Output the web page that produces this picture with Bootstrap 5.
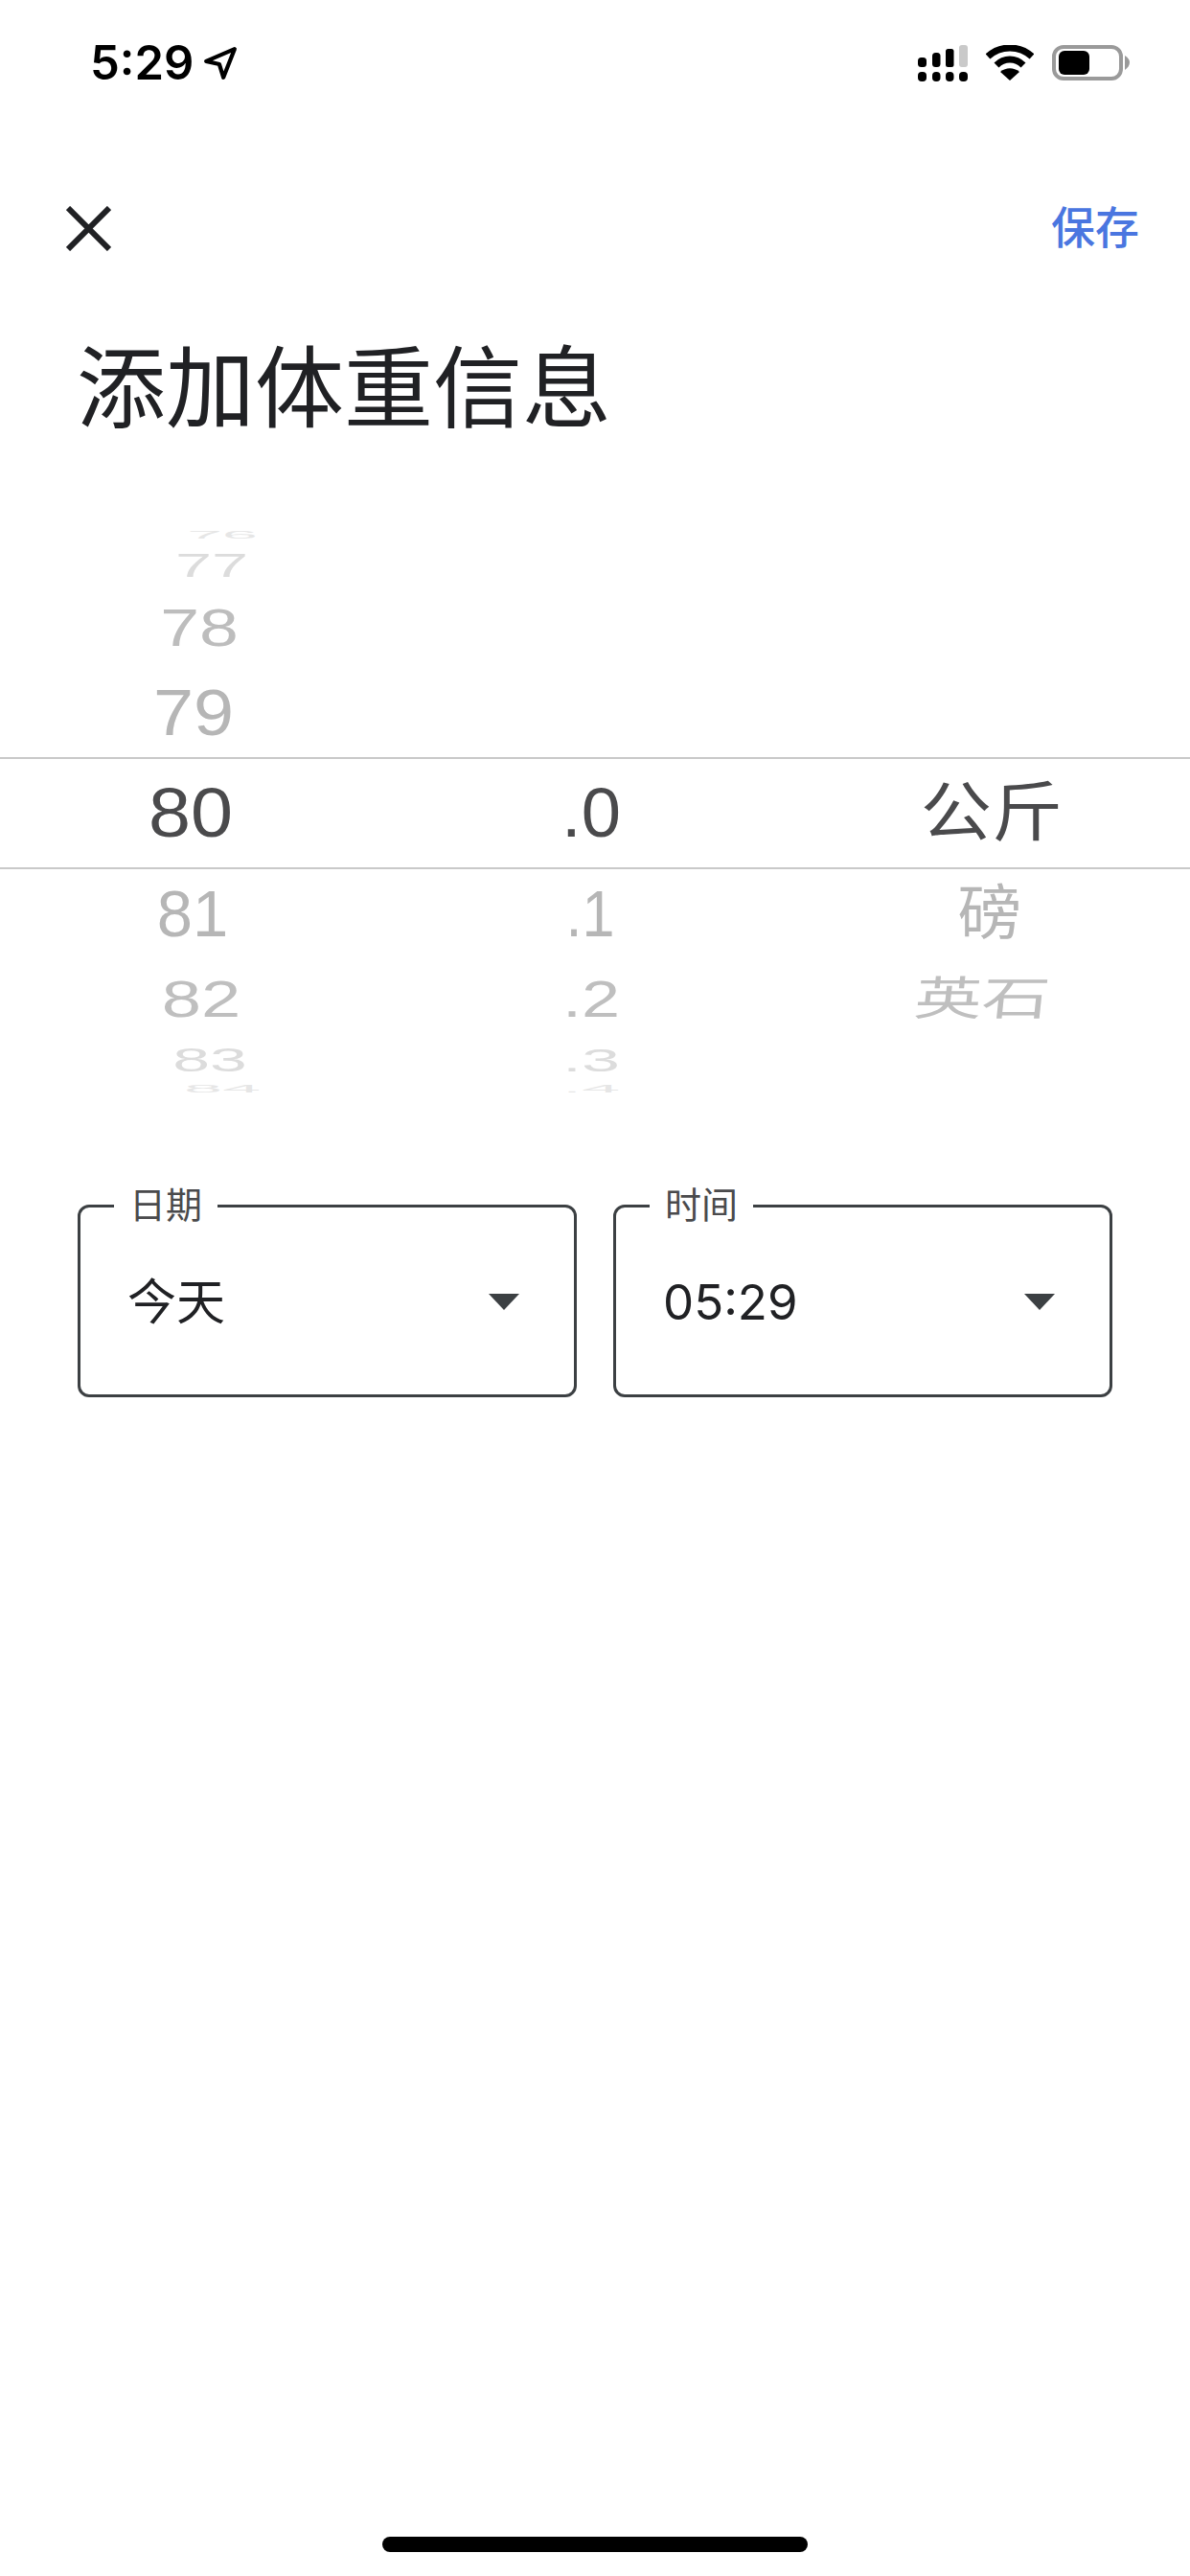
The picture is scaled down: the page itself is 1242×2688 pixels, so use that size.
<!DOCTYPE html>
<html lang="zh-CN">
<head>
  <meta charset="UTF-8">
  <meta name="viewport" content="width=device-width, initial-scale=1.0">
  <title>添加体重信息</title>
  <link href="https://cdn.jsdelivr.net/npm/bootstrap@5.3.0/dist/css/bootstrap.min.css" rel="stylesheet">
  <script src="https://cdn.jsdelivr.net/npm/bootstrap@5.3.0/dist/js/bootstrap.bundle.min.js" defer></script>
  <style>
    body {
      font-family: "Liberation Sans", "Noto Sans CJK SC", sans-serif;
      color: #202124;
      background: #fff;
    }

    /* status bar */
    .status-bar {
      height: 110px;
      padding: 21px 63px 0 94px;
    }

    .status-time {
      font-family: Inter, "Liberation Sans", sans-serif;
      font-size: 49px;
      font-weight: 600;
      line-height: 1;
      color: #000;
    }

    .status-gps {
      margin-left: 10px;
    }

    .status-icon-gap {
      margin-left: 19px;
    }

    /* top bar */
    .top-bar {
      height: 92px;
      margin-top: 82px;
      padding: 0 53px 0 69px;
    }

    .save-link {
      font-size: 46px;
      font-weight: 500;
      line-height: 1;
      color: #4a76e0;
      text-decoration: none;
    }

    .page-title {
      font-size: 93px;
      font-weight: 400;
      line-height: 110px;
      margin: 68px 0 0 80px;
      color: #202124;
    }

    /* picker wheel */
    .wheel {
      margin-top: 88px;
      font-size: 72px;
      color: #b4b4b4;
    }

    .wheel .row {
      align-items: center;
    }

    .wheel .row > div {
      text-align: center;
      white-space: nowrap;
    }

    .wheel .row > div > span {
      display: inline-block;
    }

    .wheel-r1 { height: 16px; line-height: 16px; color: #e6e6e6; }
    .wheel-r2 { height: 48px; line-height: 48px; color: #dcdcdc; }
    .wheel-r3 { height: 82px; line-height: 82px; color: #bdbdbd; }
    .wheel-r4 { height: 94px; line-height: 94px; color: #b6b6b6; }
    .wheel-now {
      height: 117px;
      line-height: 113px;
      color: #4a4a4c;
      border-top: 2px solid #c9c9c9;
      border-bottom: 2px solid #c9c9c9;
    }
    .wheel-r6 { height: 93px; line-height: 93px; color: #b6b6b6; }
    .wheel-r7 { height: 84px; line-height: 84px; color: #bfbfbf; }
    .wheel-r8 { height: 44px; line-height: 44px; color: #dcdcdc; }
    .wheel-r9 { height: 16px; line-height: 16px; color: #e6e6e6; }

    .c1-r1 { transform: translateX(25px) scale(.92, .14); }
    .c1-r2 { transform: translateX(14px) scale(.95, .48); }
    .c1-r3 { transform: translateX(1px) scale(1.02, .77); }
    .c1-r4 { transform: translateX(-5px) scale(1.05, .94); }
    .c1-now { transform: translateX(-8px) scale(1.1, 1); }
    .c1-r6 { transform: translateX(-6px) scale(.93, .94); }
    .c1-r7 { transform: translateX(3px) scale(1.03, .75); }
    .c1-r8 { transform: translateX(12px) scale(.97, .48); }
    .c1-r9 { transform: translateX(25px) scale(1, .14); }

    .c2-now { transform: translateX(-4px) scale(1.03, 1); }
    .c2-r6 { transform: translateX(-5px) scale(.85, .94); }
    .c2-r7 { transform: translateX(-4px) scale(1, .75); }
    .c2-r8 { transform: translateX(-4px) scale(1, .46); }
    .c2-r9 { transform: translateX(-4px) scale(1, .14); }

    .c3-now { transform: translateX(0) scale(1.03, .94); }
    .c3-r6 { transform: translateX(-2px) scale(.93, .86); }
    .c3-r7 { transform: translateX(-10px) skewX(-6deg) scale(.98, .67); }

    /* date / time fields */
    .field-row {
      margin: 95px 0 0 81px;
      width: 1080px;
      gap: 38px;
    }

    .field-box {
      flex: 1 1 0;
      height: 219px;
      border: 3px solid #3c4043;
      border-radius: 12px;
      padding: 0 57px 0 49px;
    }

    .field-box legend {
      float: none;
      width: auto;
      font-size: 38px;
      line-height: 38px;
      margin: 0 0 0 -14px;
      padding: 0 16px;
      color: #4a4a4c;
    }

    .field-value {
      height: 162px;
      font-family: Inter, "Noto Sans CJK SC", sans-serif;
      font-size: 51px;
      line-height: 1;
      color: #202124;
    }

    .field-caret {
      width: 0;
      height: 0;
      border-left: 16px solid transparent;
      border-right: 16px solid transparent;
      border-top: 17px solid #3c4043;
    }

    .home-bar {
      width: 444px;
      height: 16px;
      margin-bottom: 25px;
      background: #000;
      border-radius: 8px;
    }
  </style>
</head>
<body>
  <div class="d-flex flex-column min-vh-100">
    <!-- Status bar -->
    <div class="status-bar d-flex justify-content-between align-items-center">
      <div class="d-flex align-items-center">
        <span class="status-time">5:29</span>
        <svg class="status-gps" width="36" height="36" viewBox="0 0 34 34" aria-hidden="true">
          <path d="M31 3 L3 15 L16 18 L20 31 Z" fill="none" stroke="#000" stroke-width="4" stroke-linejoin="round"/>
        </svg>
      </div>
      <div class="d-flex align-items-center">
        <svg width="52" height="38" viewBox="0 0 52 38" aria-hidden="true">
          <rect x="0" y="13" width="9" height="10" rx="3.5" fill="#000"/>
          <rect x="15" y="8" width="8.5" height="15" rx="3.5" fill="#000"/>
          <rect x="29" y="4" width="8.5" height="19" rx="2.5" fill="#000"/>
          <rect x="43" y="0" width="9" height="23" rx="3" fill="#c9c9c9"/>
          <rect x="0" y="28" width="9" height="10" rx="4" fill="#000"/>
          <rect x="15" y="28" width="8.5" height="10" rx="4" fill="#000"/>
          <rect x="29" y="28" width="8.5" height="10" rx="4" fill="#000"/>
          <rect x="43" y="28" width="9" height="10" rx="4" fill="#000"/>
        </svg>
        <svg class="status-icon-gap" width="50" height="38" viewBox="0 0 50 38" aria-hidden="true">
          <path d="M2 12 C15 0 35 0 48 12" fill="none" stroke="#000" stroke-width="7"/>
          <path d="M11 21 C19 13 31 13 39 21" fill="none" stroke="#000" stroke-width="7"/>
          <path d="M25 37 L15 28 C21 23 29 23 35 28 Z" fill="#000"/>
        </svg>
        <svg class="status-icon-gap" width="81" height="37" viewBox="0 0 81 37" aria-hidden="true">
          <rect x="2" y="2" width="70" height="33" rx="10" fill="none" stroke="#9a9a9a" stroke-width="4"/>
          <rect x="7" y="6" width="32" height="25" rx="6" fill="#000"/>
          <path d="M76 11 C79 13 81 15 81 18 C81 21 79 24 76 26 Z" fill="#9a9a9a"/>
        </svg>
      </div>
    </div>

    <!-- Top bar -->
    <div class="top-bar d-flex justify-content-between align-items-center">
      <svg width="47" height="47" viewBox="0 0 47 47" aria-hidden="true">
        <path d="M2 2 L45 45 M45 2 L2 45" fill="none" stroke="#202124" stroke-width="6"/>
      </svg>
      <a href="#" class="save-link">保存</a>
    </div>

    <h1 class="page-title">添加体重信息</h1>

    <!-- Weight picker -->
    <div class="wheel">
      <div class="row g-0 wheel-r1"><div class="col-4"><span class="c1-r1">76</span></div><div class="col-4"></div><div class="col-4"></div></div>
      <div class="row g-0 wheel-r2"><div class="col-4"><span class="c1-r2">77</span></div><div class="col-4"></div><div class="col-4"></div></div>
      <div class="row g-0 wheel-r3"><div class="col-4"><span class="c1-r3">78</span></div><div class="col-4"></div><div class="col-4"></div></div>
      <div class="row g-0 wheel-r4"><div class="col-4"><span class="c1-r4">79</span></div><div class="col-4"></div><div class="col-4"></div></div>
      <div class="row g-0 wheel-now">
        <div class="col-4"><span class="c1-now">80</span></div>
        <div class="col-4"><span class="c2-now">.0</span></div>
        <div class="col-4"><span class="c3-now">公斤</span></div>
      </div>
      <div class="row g-0 wheel-r6">
        <div class="col-4"><span class="c1-r6">81</span></div>
        <div class="col-4"><span class="c2-r6">.1</span></div>
        <div class="col-4"><span class="c3-r6">磅</span></div>
      </div>
      <div class="row g-0 wheel-r7">
        <div class="col-4"><span class="c1-r7">82</span></div>
        <div class="col-4"><span class="c2-r7">.2</span></div>
        <div class="col-4"><span class="c3-r7">英石</span></div>
      </div>
      <div class="row g-0 wheel-r8">
        <div class="col-4"><span class="c1-r8">83</span></div>
        <div class="col-4"><span class="c2-r8">.3</span></div>
        <div class="col-4"></div>
      </div>
      <div class="row g-0 wheel-r9">
        <div class="col-4"><span class="c1-r9">84</span></div>
        <div class="col-4"><span class="c2-r9">.4</span></div>
        <div class="col-4"></div>
      </div>
    </div>

    <!-- Date and time -->
    <div class="field-row d-flex">
      <fieldset class="field-box">
        <legend>日期</legend>
        <div class="field-value d-flex justify-content-between align-items-center">
          <span>今天</span>
          <span class="field-caret"></span>
        </div>
      </fieldset>
      <fieldset class="field-box">
        <legend>时间</legend>
        <div class="field-value d-flex justify-content-between align-items-center">
          <span>05:29</span>
          <span class="field-caret"></span>
        </div>
      </fieldset>
    </div>

    <div class="home-bar mt-auto mx-auto"></div>
  </div>
</body>
</html>
